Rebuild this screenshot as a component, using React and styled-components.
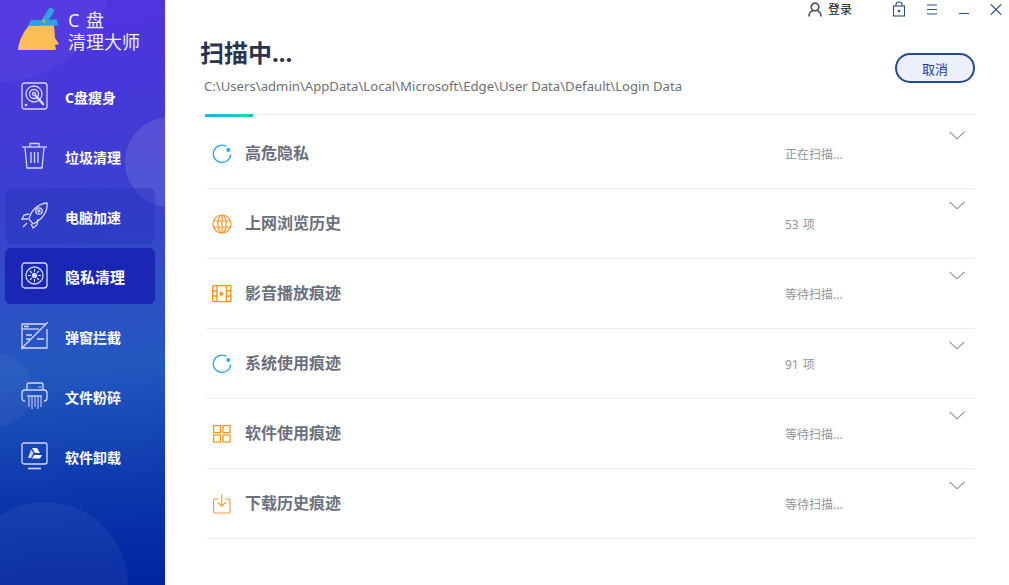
import React from "react";
import styled, { createGlobalStyle } from "styled-components";

const GlobalStyle = createGlobalStyle`
  html, body { margin: 0; padding: 0; background: #fff; }
  body { font-family: "Noto Sans", "Noto Sans CJK SC", sans-serif; }
`;

const Broom = () => (
  <svg width="44" height="44" viewBox="0 0 44 44">
    <path d="M27 12 L33 3" stroke="#35a0e4" strokeWidth="6" strokeLinecap="round" />
    <path d="M0 42 C1 32 6 22 12 17 L36 17 L37 30 L41 36 L37 37 L38 42 Z" fill="#fcbd55" />
    <path d="M13 12 L39 11.5 L40 17.5 L10 18 Z" fill="#2f9fe0" />
    <path d="M26 11 L26 15 M24 13 L28 14" stroke="#8ec63f" strokeWidth="1.4" />
  </svg>
);

const DiskIcon = () => (
  <svg width="28" height="28" viewBox="0 0 28 28" fill="none" stroke="#d5d9fb" strokeWidth="1.3">
    <rect x="1" y="1" width="25" height="26" rx="2.5" />
    <circle cx="13" cy="12" r="8" />
    <circle cx="13" cy="12" r="4.5" />
    <circle cx="13" cy="12" r="1.5" />
    <path d="M15 14 L22 22" strokeWidth="2.6" strokeLinecap="round" />
    <circle cx="5" cy="23" r=".7" fill="#fff" />
  </svg>
);

const TrashIcon = () => (
  <svg width="28" height="28" viewBox="0 0 28 28" fill="none" stroke="#d5d9fb" strokeWidth="1.3">
    <path d="M1 5 H26" />
    <path d="M9 5 V1.5 H18 V5" />
    <path d="M4 6 L6 26 H21 L23 6" />
    <path d="M10 10 V21 M13.5 10 V21 M17 10 V21" />
  </svg>
);

const RocketIcon = () => (
  <svg width="28" height="28" viewBox="0 0 28 28" fill="none" stroke="#d5d9fb" strokeWidth="1.3">
    <path d="M8 17 C10 8 17 2 26 1 C27 9 22 17 12 22 Z" />
    <path d="M8 12 L3 13 L1 17 L7 17" />
    <path d="M17 17 L16 23 L12 26 L10 22" />
    <circle cx="18" cy="9" r="3.2" />
    <circle cx="18" cy="9" r="1" />
    <path d="M6 21 L2 25" />
  </svg>
);

const PrivacyIcon = () => (
  <svg width="28" height="28" viewBox="0 0 28 28" fill="none" stroke="#d5d9fb" strokeWidth="1.3">
    <rect x="1" y="1" width="25" height="25" rx="3" />
    <circle cx="13.5" cy="13.5" r="8.5" />
    <circle cx="13.5" cy="13.5" r="2" fill="#d5d9fb" />
    <path d="M13.5 7 V10 M13.5 17 V20 M7 13.5 H10 M17 13.5 H20 M9 9 L11 11 M16 16 L18 18 M18 9 L16 11 M11 16 L9 18" strokeWidth="1.1" />
  </svg>
);

const PopupIcon = () => (
  <svg width="28" height="28" viewBox="0 0 28 28" fill="none" stroke="#d5d9fb" strokeWidth="1.3">
    <path d="M26 7 V26 H1 V2 H24" />
    <path d="M1 7 H18" />
    <path d="M3 4.5 H8" strokeWidth="1.6" />
    <path d="M5 13 H11 M5 17 H9 M16 17 H23" strokeWidth="1.6" />
    <path d="M0 27 L27 0" />
  </svg>
);

const ShredIcon = () => (
  <svg width="28" height="28" viewBox="0 0 28 28" fill="none" stroke="#d5d9fb" strokeWidth="1.3">
    <path d="M6 8 V2.5 Q6 1 8 1 H20 Q22 1 22 2.5 V8" />
    <path d="M4 19 Q1 19 1 16 V11 Q1 8 4 8 H23 Q26 8 26 11 V16 Q26 19 23 19" />
    <path d="M6 14 H21" />
    <path d="M8 14 V25 M11 14 V27 M14 14 V25 M17 14 V27 M20 14 V25" strokeWidth="1" />
    <path d="M17 5 H22" strokeWidth="1.5" stroke="#8d9be8" />
  </svg>
);

const UninstallIcon = () => (
  <svg width="28" height="28" viewBox="0 0 28 28" fill="none" stroke="#d5d9fb" strokeWidth="1.3">
    <rect x="1" y="1" width="25" height="21" rx="2" />
    <path d="M7 26.5 H20" strokeWidth="1.6" />
    <path d="M11 6 H16 L19 11 H14 Z" fill="#f2f3ff" stroke="none" />
    <path d="M10 7.5 L12.5 11 L10 16 H7 Z" fill="#cfd5f7" stroke="none" />
    <path d="M13 13 H21 L19 16.5 H11 Z" fill="#f2f3ff" stroke="none" />
  </svg>
);

const Spinner = () => (
  <svg width="20" height="20" viewBox="0 0 20 20" fill="none">
    <path d="M14.5 2.3 A8.7 8.7 0 1 0 18.7 10.5" stroke="#2aa7f5" strokeWidth="1.3" />
    <circle cx="16.3" cy="6" r="2" fill="#2aa7f5" />
  </svg>
);

const GlobeIcon = () => (
  <svg width="20" height="20" viewBox="0 0 20 20" fill="none" stroke="#f9962e" strokeWidth="1.2">
    <circle cx="10" cy="10" r="9" />
    <ellipse cx="10" cy="10" rx="4.2" ry="9" />
    <path d="M10 1 V19 M1.5 7 H18.5 M1.5 13 H18.5" />
  </svg>
);

const FilmIcon = () => (
  <svg width="20" height="18" viewBox="0 0 20 18" fill="none" stroke="#f9901a" strokeWidth="1.3">
    <rect x=".7" y=".7" width="18.2" height="16" rx="1" />
    <path d="M5 .7 V16.7 M14.5 .7 V16.7 M.7 6 H5 M.7 11 H5 M14.5 6 H18.9 M14.5 11 H18.9" />
    <path d="M8 6 L12 8.7 L8 11.4 Z" fill="#f9901a" stroke="none" />
  </svg>
);

const GridIcon = () => (
  <svg width="18" height="18" viewBox="0 0 18 18" fill="none" stroke="#f9901a" strokeWidth="1.2">
    <rect x=".6" y=".6" width="7" height="7" />
    <rect x="10" y=".6" width="7" height="7" />
    <rect x=".6" y="10" width="7" height="7" />
    <rect x="10" y="10" width="7" height="7" />
  </svg>
);

const DownloadIcon = () => (
  <svg width="18" height="20" viewBox="0 0 18 20" fill="none" stroke="#f9962e" strokeWidth="1.1">
    <path d="M5.5 5 H2 Q.6 5 .6 6.5 V18 Q.6 19 2 19 H15.5 Q17 19 17 18 V6.5 Q17 5 15.5 5 H12" />
    <path d="M8.8 .5 V12 M5 8.5 L8.8 12.3 L12.6 8.5" />
  </svg>
);

const Chevron = () => (
  <svg width="16" height="9" viewBox="0 0 16 9" fill="none" stroke="#8c8aa6" strokeWidth="1.1">
    <path d="M.5 .8 L8 7.8 L15.5 .8" />
  </svg>
);

const navItems = [
  { label: "C盘瘦身", icon: <DiskIcon /> },
  { label: "垃圾清理", icon: <TrashIcon /> },
  { label: "电脑加速", icon: <RocketIcon />, state: "hover" },
  { label: "隐私清理", icon: <PrivacyIcon />, state: "active" },
  { label: "弹窗拦截", icon: <PopupIcon /> },
  { label: "文件粉碎", icon: <ShredIcon /> },
  { label: "软件卸载", icon: <UninstallIcon /> },
];

const rows = [
  { label: "高危隐私", status: "正在扫描...", icon: <Spinner />, first: true },
  { label: "上网浏览历史", status: "53 项", icon: <GlobeIcon /> },
  { label: "影音播放痕迹", status: "等待扫描...", icon: <FilmIcon /> },
  { label: "系统使用痕迹", status: "91 项", icon: <Spinner /> },
  { label: "软件使用痕迹", status: "等待扫描...", icon: <GridIcon /> },
  { label: "下载历史痕迹", status: "等待扫描...", icon: <DownloadIcon /> },
];

export default function App() {
  return (
    <>
      <GlobalStyle />
      <Page>
        <Sidebar>
          <Blob $left={-112} $top={-142} $size={224} $alpha={0.04} />
          <Blob $left={125} $top={117} $size={90} $alpha={0.11} />
          <Blob $left={-42} $top={353} $size={74} $alpha={0.04} />
          <Blob $left={-38} $top={502} $size={166} $alpha={0.05} />
          <Logo>
            <Broom />
            <LogoText>
              <span>C 盘</span>
              <span>清理大师</span>
            </LogoText>
          </Logo>
          <Nav>
            {navItems.map((item) => (
              <NavItem key={item.label} $state={item.state}>
                <NavIcon>{item.icon}</NavIcon>
                <NavLabel $state={item.state}>{item.label}</NavLabel>
              </NavItem>
            ))}
          </Nav>
        </Sidebar>
        <Main>
          <TitleBar>
            <Login>
              <svg width="14" height="15" viewBox="0 0 14 15" fill="none" stroke="#555" strokeWidth="1.7">
                <circle cx="7" cy="5" r="3.8" />
                <path d="M1 14.5 C1 10.5 3.5 9 5 8.5 M13 14.5 C13 10.5 10.5 9 9 8.5" />
              </svg>
              登录
            </Login>
            <WinButtons>
              <svg width="14" height="16" viewBox="0 0 14 16" fill="none" stroke="#25508f" strokeWidth="1.1">
                <rect x="1.5" y="5" width="11" height="10" />
                <path d="M4 5 V3.5 Q4 1 7 1 Q10 1 10 3.5 V5" />
                <circle cx="7" cy="10" r=".8" fill="#25508f" />
              </svg>
              <svg width="12" height="11" viewBox="0 0 12 11" stroke="#25508f" strokeWidth="1.1">
                <path d="M1 1 H11 M1 5.5 H11 M1 10 H11" />
              </svg>
              <svg width="12" height="11" viewBox="0 0 12 11" stroke="#25508f" strokeWidth="1.1">
                <path d="M1 9.5 H11" />
              </svg>
              <svg width="12" height="11" viewBox="0 0 12 11" stroke="#25508f" strokeWidth="1.1">
                <path d="M.8 .3 L11.2 10.7 M11.2 .3 L.8 10.7" />
              </svg>
            </WinButtons>
          </TitleBar>
          <Header>
            <div>
              <Title>扫描中...</Title>
              <CurrentPath>C:\Users\admin\AppData\Local\Microsoft\Edge\User Data\Default\Login Data</CurrentPath>
            </div>
            <CancelButton>取消</CancelButton>
          </Header>
          <Progress>
            <ProgressFill style={{ width: "48px" }} />
          </Progress>
          <List>
            {rows.map((row) => (
              <Row key={row.label} $first={row.first}>
                <RowIcon $first={row.first}>{row.icon}</RowIcon>
                <RowLabel $first={row.first}>{row.label}</RowLabel>
                <RowStatus $first={row.first}>{row.status}</RowStatus>
                <RowChevron $first={row.first}>
                  <Chevron />
                </RowChevron>
              </Row>
            ))}
          </List>
        </Main>
      </Page>
    </>
  );
}

const Page = styled.div`
  display: flex;
  width: 1009px;
  height: 585px;
  overflow: hidden;
  background: #fff;
`;

const Sidebar = styled.aside`
  position: relative;
  flex: 0 0 165px;
  overflow: hidden;
  box-sizing: border-box;
  padding-top: 6px;
  background: linear-gradient(175deg, #5232e2 0%, #3c3fd0 32%, #2458c0 62%, #0a35ab 85%, #0024a0 100%);
`;

const Blob = styled.div`
  position: absolute;
  left: ${(p) => p.$left}px;
  top: ${(p) => p.$top}px;
  width: ${(p) => p.$size}px;
  height: ${(p) => p.$size}px;
  border-radius: 50%;
  background: rgba(255, 255, 255, ${(p) => p.$alpha});
`;

const Logo = styled.div`
  position: relative;
  display: flex;
  align-items: flex-start;
  gap: 6px;
  height: 62px;
  padding: 2px 0 0 18px;
  box-sizing: border-box;
`;

const LogoText = styled.div`
  display: flex;
  flex-direction: column;
  padding-top: 1px;
  color: #f0f1ff;
  font-size: 18px;
  line-height: 22px;
  word-spacing: 2px;
`;

const Nav = styled.nav`
  position: relative;
  display: flex;
  flex-direction: column;
  gap: 4px;
  padding: 0 10px 0 5px;
`;

const NavItem = styled.div`
  display: flex;
  align-items: center;
  height: 56px;
  padding-left: 16px;
  border-radius: 6px;
  background: ${(p) =>
    p.$state === "active" ? "#1a27b4" : p.$state === "hover" ? "rgba(40, 50, 190, 0.45)" : "transparent"};
`;

const NavIcon = styled.span`
  display: flex;
  width: 28px;
  height: 28px;
  margin-right: 16px;
`;

const NavLabel = styled.span`
  margin-top: ${(p) => (p.$state === "active" ? 0 : 2)}px;
  color: #fff;
  font-size: ${(p) => (p.$state === "active" ? 15 : 14)}px;
  font-weight: 700;
`;

const Main = styled.main`
  flex: 1;
  min-width: 0;
  padding: 0 35px 0 40px;
`;

const TitleBar = styled.div`
  display: flex;
  align-items: center;
  justify-content: flex-end;
  height: 18px;
  margin-right: -28px;
`;

const Login = styled.div`
  display: flex;
  align-items: center;
  gap: 6px;
  margin-right: 40px;
  color: #111;
  font-size: 12px;
`;

const WinButtons = styled.div`
  display: flex;
  align-items: center;
  gap: 20px;
`;

const Header = styled.div`
  display: flex;
  align-items: flex-start;
  justify-content: space-between;
  height: 96px;
  margin-left: -5px;
  margin-right: -1px;
`;

const Title = styled.h1`
  margin: 18px 0 0;
  color: #2b3350;
  font-size: 24px;
  font-weight: 700;
  line-height: 34px;
`;

const CurrentPath = styled.div`
  margin: 7px 0 0 4px;
  color: #6f6f75;
  font-size: 13.15px;
  line-height: 18px;
`;

const CancelButton = styled.button`
  width: 80px;
  height: 30px;
  margin-top: 35px;
  border: 2px solid #1f4c94;
  border-radius: 15px;
  background: #edf0fa;
  color: #22409a;
  font-family: inherit;
  font-size: 13px;
  padding: 0;
`;

const Progress = styled.div`
  height: 1px;
  background: #e8ebf8;
`;

const ProgressFill = styled.div`
  height: 3px;
  background: linear-gradient(90deg, #2caaf5 0%, #1cc4d8 60%, #12e49a 91%, #2caaf5 91%);
`;

const List = styled.div`
  display: flex;
  flex-direction: column;
`;

const Row = styled.div`
  position: relative;
  display: flex;
  align-items: center;
  box-sizing: border-box;
  height: ${(p) => (p.$first ? 74 : 70)}px;
  padding-left: 7px;
  border-bottom: 1px solid #edeefa;
`;

const RowIcon = styled.span`
  display: flex;
  justify-content: center;
  width: 20px;
  margin-right: 13px;
  margin-top: ${(p) => (p.$first ? 4 : 0)}px;
`;

const RowLabel = styled.span`
  flex: 0 0 540px;
  margin-bottom: ${(p) => (p.$first ? 0 : 4)}px;
  color: #6b6f7c;
  font-size: 16px;
  font-weight: 700;
`;

const RowStatus = styled.span`
  margin-top: ${(p) => (p.$first ? 4 : 0)}px;
  color: #92949a;
  font-size: 12px;
  word-spacing: 1px;
`;

const RowChevron = styled.span`
  position: absolute;
  top: ${(p) => (p.$first ? 16 : 12)}px;
  right: 9px;
  display: flex;
`;
